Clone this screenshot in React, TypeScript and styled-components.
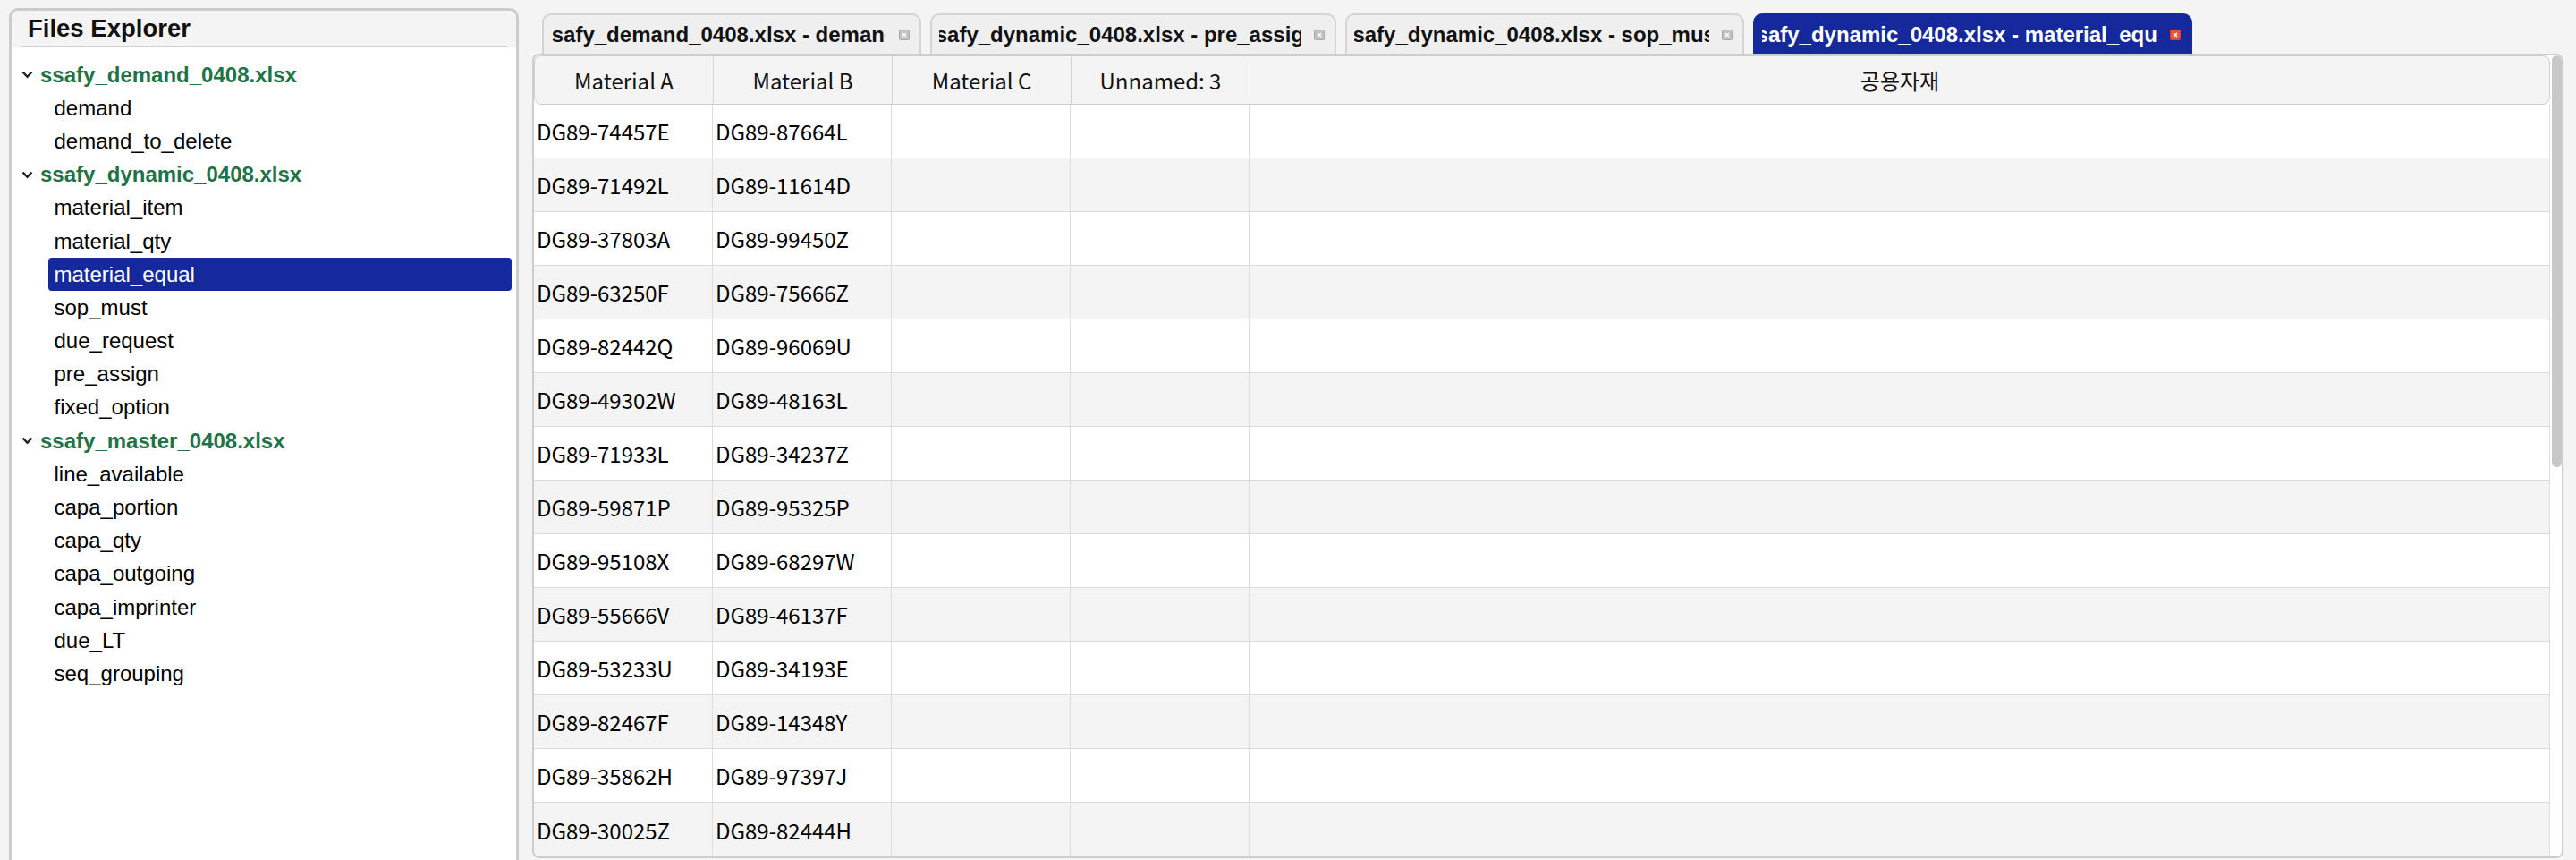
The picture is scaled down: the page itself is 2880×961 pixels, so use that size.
import React from "react";
import styled, { createGlobalStyle } from "styled-components";

const Global = createGlobalStyle`
  html, body { margin: 0; padding: 0; background: #f4f4f4; overflow: hidden; }
  * { box-sizing: border-box; }
`;

const Page = styled.div`
  display: flex;
  gap: 15px;
  padding: 9px 14px 0 10px;
  height: 961px;
  background: #f4f4f4;
`;

const Explorer = styled.aside`
  width: 570px;
  flex: none;
  height: 970px;
  background: #fff;
  border: 3px solid #cccccc;
  border-radius: 10px 10px 0 0;
  overflow: hidden;
  font-family: "Liberation Sans", Arial, sans-serif;
`;

const ExplorerHeader = styled.div`
  background: #f4f4f4;
  height: 39px;
  line-height: 39px;
  padding-left: 18px;
  font-size: 27.5px;
  font-weight: bold;
  color: #111;
`;

const HeaderRule = styled.div`
  background: #f4f4f4;
  padding: 0 10px;
  & > div { height: 2px; background: #d2d2d2; }
`;

const Tree = styled.div`
  padding-top: 12px;
  display: flex;
  flex-direction: column;
`;

const GroupRow = styled.div`
  height: 37.2px;
  display: flex;
  align-items: center;
  gap: 8px;
  padding-left: 11px;
  color: #217346;
  font-weight: bold;
  font-size: 24px;
`;

const Item = styled.div<{ $active?: boolean }>`
  height: 37.2px;
  display: flex;
  align-items: center;
  margin: 0 5px 0 41px;
  padding-left: 6.5px;
  border-radius: 4px;
  font-size: 24px;
  color: ${(p) => (p.$active ? "#fff" : "#000")};
  background: ${(p) => (p.$active ? "#16299c" : "transparent")};
`;

const Main = styled.main`
  flex: 1;
  min-width: 0;
  display: flex;
  flex-direction: column;
  padding-top: 6px;
`;

const TabBar = styled.div`
  display: flex;
  gap: 10px;
  height: 45px;
  padding-left: 11px;
`;

const Tab = styled.div<{ $active?: boolean }>`
  display: flex;
  align-items: center;
  height: 45px;
  padding: 0 11px 0 8px;
  border: 2px solid ${(p) => (p.$active ? "#16299c" : "#d4d4d4")};
  border-bottom: none;
  border-radius: 10px 10px 0 0;
  background: ${(p) => (p.$active ? "#16299c" : "#efefef")};
  color: ${(p) => (p.$active ? "#fff" : "#111")};
  font-family: "Liberation Sans", Arial, sans-serif;
  font-weight: bold;
  font-size: 24px;
`;

const TabLabel = styled.div`
  display: flex;
  justify-content: center;
  overflow: hidden;
  white-space: nowrap;
  margin-right: 14px;
  & > span { flex: none; }
`;

const Sheet = styled.div`
  height: 899px;
  display: flex;
  border: 2px solid #cdcdcd;
  border-radius: 8px;
  background: #fff;
  overflow: hidden;
  font-family: "Noto Sans CJK KR", "Noto Sans", sans-serif;
  font-size: 24px;
  color: #000;
`;

const Table = styled.div`
  flex: 1;
  min-width: 0;
  display: flex;
  flex-direction: column;
`;

const Columns = `200px 200px 200px 200px 1fr`;

const HeadRow = styled.div`
  display: grid;
  grid-template-columns: ${Columns};
  height: 55px;
  background: #f4f4f4;
  border: 1px solid #cfcfcf;
  border-radius: 8px;
  overflow: hidden;
  color: #111;
`;

const HeadCell = styled.div`
  display: flex;
  align-items: center;
  justify-content: center;
  border-right: 1px solid #d2d2d2;
  &:last-child { border-right: none; }
`;

const Row = styled.div<{ $odd: boolean }>`
  display: grid;
  grid-template-columns: ${Columns};
  height: 60px;
  background: ${(p) => (p.$odd ? "#f4f4f4" : "#fff")};
  border-bottom: 1px solid #dadada;
  &:last-child { border-bottom: none; }
`;

const Cell = styled.div`
  display: flex;
  align-items: center;
  padding-left: 3px;
  border-right: 1px solid #dedede;
`;

const ScrollTrack = styled.div`
  width: 13px;
  flex: none;
  background: #fff;
  padding-left: 2px;
`;

const ScrollThumb = styled.div`
  height: 460px;
  background: #c8c8c8;
  border-radius: 6px;
`;

const Chevron = () => (
  <svg width="13" height="9" viewBox="0 0 13 9" aria-hidden>
    <polyline points="1.5,1.5 6.5,6.8 11.5,1.5" fill="none" stroke="#222" strokeWidth="2.4" />
  </svg>
);

const CloseIcon = ({ active }: { active?: boolean }) => (
  <svg width="12" height="12" viewBox="0 0 12 12" aria-hidden style={{ flex: "none" }}>
    <rect x="0.5" y="0.5" width="11" height="11" rx="1" fill={active ? "#e4573d" : "#c2c2c2"} stroke={active ? "#d0452c" : "#a9a9a9"} />
    <path d="M4 4 L8 8 M8 4 L4 8" stroke="#fff" strokeWidth="1.5" />
  </svg>
);

const groups = [
  { name: "ssafy_demand_0408.xlsx", items: ["demand", "demand_to_delete"] },
  {
    name: "ssafy_dynamic_0408.xlsx",
    items: ["material_item", "material_qty", "material_equal", "sop_must", "due_request", "pre_assign", "fixed_option"],
  },
  {
    name: "ssafy_master_0408.xlsx",
    items: ["line_available", "capa_portion", "capa_qty", "capa_outgoing", "capa_imprinter", "due_LT", "seq_grouping"],
  },
];

const tabs = [
  { text: "ssafy_demand_0408.xlsx - demand", w: 375 },
  { text: "ssafy_dynamic_0408.xlsx - pre_assign", w: 405 },
  { text: "ssafy_dynamic_0408.xlsx - sop_must", w: 397 },
  { text: "ssafy_dynamic_0408.xlsx - material_equal", w: 442, active: true },
];

const headers = ["Material A", "Material B", "Material C", "Unnamed: 3", "공용자재"];

const rows = [
  ["DG89-74457E", "DG89-87664L"],
  ["DG89-71492L", "DG89-11614D"],
  ["DG89-37803A", "DG89-99450Z"],
  ["DG89-63250F", "DG89-75666Z"],
  ["DG89-82442Q", "DG89-96069U"],
  ["DG89-49302W", "DG89-48163L"],
  ["DG89-71933L", "DG89-34237Z"],
  ["DG89-59871P", "DG89-95325P"],
  ["DG89-95108X", "DG89-68297W"],
  ["DG89-55666V", "DG89-46137F"],
  ["DG89-53233U", "DG89-34193E"],
  ["DG89-82467F", "DG89-14348Y"],
  ["DG89-35862H", "DG89-97397J"],
  ["DG89-30025Z", "DG89-82444H"],
];

export default function App() {
  return (
    <>
      <Global />
      <Page>
        <Explorer>
          <ExplorerHeader>Files Explorer</ExplorerHeader>
          <HeaderRule>
            <div />
          </HeaderRule>
          <Tree>
            {groups.map((g) => (
              <React.Fragment key={g.name}>
                <GroupRow>
                  <Chevron />
                  <span>{g.name}</span>
                </GroupRow>
                {g.items.map((it) => (
                  <Item key={it} $active={it === "material_equal"}>
                    {it}
                  </Item>
                ))}
              </React.Fragment>
            ))}
          </Tree>
        </Explorer>
        <Main>
          <TabBar>
            {tabs.map((t) => (
              <Tab key={t.text} $active={t.active}>
                <TabLabel style={{ width: t.w }}>
                  <span>{t.text}</span>
                </TabLabel>
                <CloseIcon active={t.active} />
              </Tab>
            ))}
          </TabBar>
          <Sheet>
            <Table>
              <HeadRow>
                {headers.map((h) => (
                  <HeadCell key={h}>{h}</HeadCell>
                ))}
              </HeadRow>
              {rows.map((r, i) => (
                <Row key={r[0]} $odd={i % 2 === 1}>
                  <Cell>{r[0]}</Cell>
                  <Cell>{r[1]}</Cell>
                  <Cell />
                  <Cell />
                  <Cell />
                </Row>
              ))}
            </Table>
            <ScrollTrack>
              <ScrollThumb />
            </ScrollTrack>
          </Sheet>
        </Main>
      </Page>
    </>
  );
}
